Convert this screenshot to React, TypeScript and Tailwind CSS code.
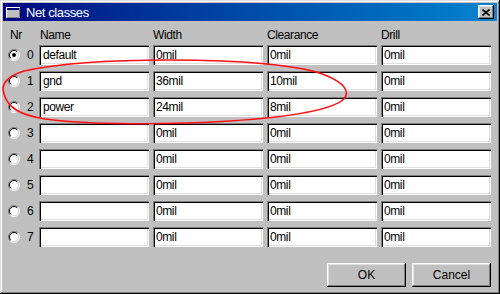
import React from "react";

type NetClass = { name: string; width: string; clearance: string; drill: string };

const classes: NetClass[] = [
  { name: "default", width: "0mil", clearance: "0mil", drill: "0mil" },
  { name: "gnd", width: "36mil", clearance: "10mil", drill: "0mil" },
  { name: "power", width: "24mil", clearance: "8mil", drill: "0mil" },
  { name: "", width: "0mil", clearance: "0mil", drill: "0mil" },
  { name: "", width: "0mil", clearance: "0mil", drill: "0mil" },
  { name: "", width: "0mil", clearance: "0mil", drill: "0mil" },
  { name: "", width: "0mil", clearance: "0mil", drill: "0mil" },
  { name: "", width: "0mil", clearance: "0mil", drill: "0mil" },
];

const sunken =
  "bg-white shadow-[inset_1px_1px_#808080,inset_2px_2px_#000,inset_-1px_-1px_#fff,inset_-2px_-2px_#dfdfdf]";
const raised =
  "bg-[#c0c0c0] shadow-[inset_-1px_-1px_#000,inset_1px_1px_#fff,inset_-2px_-2px_#808080,inset_2px_2px_#dfdfdf]";

const Radio: React.FC<{ checked?: boolean }> = ({ checked }) => (
  <svg width="12" height="12" viewBox="0 0 12 12" className="shrink-0">
    <circle cx="6" cy="6" r="4.5" fill="#fff" />
    <path d="M2.1 9.9 A5.5 5.5 0 0 1 9.9 2.1" fill="none" stroke="#808080" />
    <path d="M9.9 2.1 A5.5 5.5 0 0 1 2.1 9.9" fill="none" stroke="#fff" />
    <path d="M2.8 9.2 A4.5 4.5 0 0 1 9.2 2.8" fill="none" stroke="#000" />
    <path d="M9.2 2.8 A4.5 4.5 0 0 1 2.8 9.2" fill="none" stroke="#dfdfdf" />
    {checked && <circle cx="6" cy="6" r="2" fill="#000" />}
  </svg>
);

const Field: React.FC<{ value: string; pad?: string }> = ({ value, pad = "pl-[3px]" }) => (
  <div className={`h-[20px] flex items-center ${pad} ${sunken}`}>
    <span className="leading-none">{value}</span>
  </div>
);

const App: React.FC = () => {
  return (
    <div
      className="relative w-[500px] h-[294px] p-[3px] bg-[#c0c0c0] text-black text-[12px] tracking-[-0.4px] shadow-[inset_-1px_-1px_#000,inset_1px_1px_#dfdfdf,inset_-2px_-2px_#808080,inset_2px_2px_#fff] overflow-hidden"
      style={{ fontFamily: '"Liberation Sans", Arial, sans-serif' }}
    >
      {/* title bar */}
      <div className="h-[18px] flex items-center bg-gradient-to-r from-[#000080] to-[#1084d0] pl-[2px] pr-[3px]">
        <svg width="16" height="14" viewBox="0 0 16 14" className="shrink-0">
          <rect x="1.5" y="2.5" width="13" height="10" fill="#c0c0c0" stroke="#fff" />
          <rect x="2" y="3" width="12" height="2" fill="#000080" />
          <path d="M14.5 3 V12.5 H2" fill="none" stroke="#808080" />
        </svg>
        <span className="ml-[5px] text-white text-[13px] leading-none">Net classes</span>
        <div className={`ml-auto w-[16px] h-[14px] flex items-center justify-center ${raised}`}>
          <svg width="8" height="7" viewBox="0 0 8 7">
            <path d="M0.5 0.5 L7.5 6.5 M7.5 0.5 L0.5 6.5" stroke="#000" strokeWidth="1.6" />
          </svg>
        </div>
      </div>

      {/* table */}
      <div className="ml-[5px] pt-[7px]">
        <div className="grid grid-cols-[27px_110px_110px_110px_110px] gap-x-[4px] h-[14px] mb-[3px] leading-[14px]">
          <div className="pl-[2px]">Nr</div>
          <div className="pl-[1px]">Name</div>
          <div>Width</div>
          <div>Clearance</div>
          <div>Drill</div>
        </div>
        <div className="grid grid-cols-[27px_110px_110px_110px_110px] gap-x-[4px] gap-y-[6px]">
          {classes.map((c, i) => (
            <React.Fragment key={i}>
              <div className="h-[20px] flex items-center gap-[7px]">
                <Radio checked={i === 0} />
                <span className="leading-none">{i}</span>
              </div>
              <Field value={c.name} pad="pl-[4px]" />
              <Field value={c.width} />
              <Field value={c.clearance} />
              <Field value={c.drill} />
            </React.Fragment>
          ))}
        </div>
      </div>

      {/* buttons */}
      <div className="flex justify-end gap-[6px] mt-[16px] pr-[6px]">
        <button className={`w-[79px] h-[24px] tracking-normal ${raised}`}>OK</button>
        <button className={`w-[79px] h-[24px] tracking-normal ${raised}`}>Cancel</button>
      </div>

      {/* red annotation */}
      <svg className="absolute inset-0 pointer-events-none" width="500" height="294" viewBox="0 0 500 294">
        <path
          d="M4 94 C0 84 8 76 24 71 C60 63 120 60 170 60 C240 60 300 65 325 75 C345 83 350 92 344 99 C332 110 290 117 230 121 C170 125 90 125 45 119 C20 115 8 108 4 94"
          fill="none"
          stroke="#ff1010"
          strokeWidth="1.6"
        />
      </svg>
    </div>
  );
};

export default App;
